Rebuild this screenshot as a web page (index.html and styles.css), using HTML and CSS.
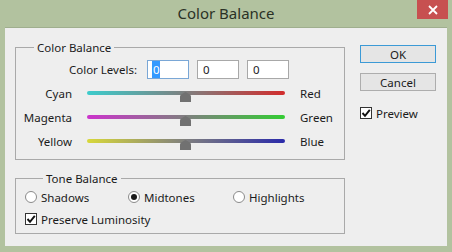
FILE: index.html
```html
<!DOCTYPE html>
<html lang="en">
  <head>
    <meta charset="utf-8">
    <title>Color Balance</title>
    <link rel="stylesheet" href="styles.css">
  </head>
  <body>
    <div class="window">
      <!-- Titelleiste -->
      <div class="titlebar">
        <span></span>
        <span class="title">Color Balance</span>
        <span class="close">
          <svg width="10" height="10" viewBox="0 0 10 10"><path d="M1 1 L9 9 M9 1 L1 9" stroke="#fff" stroke-width="1.8"/></svg>
        </span>
      </div>

      <div class="client">
        <div class="main">
          <!-- Color Balance -->
          <fieldset class="group balance">
            <legend>Color Balance</legend>
            <div class="levels">
              <label>Color Levels:</label>
              <input type="text" value="0" class="selected">
              <input type="text" value="0">
              <input type="text" value="0">
            </div>
            <div class="slider-row">
              <span class="name-left">Cyan</span>
              <div class="track cyan-red"><svg class="thumb" width="11" height="10" viewBox="0 0 11 10"><path d="M0 10 L0 4.5 Q0 3 1.5 2.2 L5.5 0 L9.5 2.2 Q11 3 11 4.5 L11 10 Z" fill="#717171"/></svg></div>
              <span class="name-right">Red</span>
            </div>
            <div class="slider-row">
              <span class="name-left">Magenta</span>
              <div class="track magenta-green"><svg class="thumb" width="11" height="10" viewBox="0 0 11 10"><path d="M0 10 L0 4.5 Q0 3 1.5 2.2 L5.5 0 L9.5 2.2 Q11 3 11 4.5 L11 10 Z" fill="#717171"/></svg></div>
              <span class="name-right">Green</span>
            </div>
            <div class="slider-row">
              <span class="name-left">Yellow</span>
              <div class="track yellow-blue"><svg class="thumb" width="11" height="10" viewBox="0 0 11 10"><path d="M0 10 L0 4.5 Q0 3 1.5 2.2 L5.5 0 L9.5 2.2 Q11 3 11 4.5 L11 10 Z" fill="#717171"/></svg></div>
              <span class="name-right">Blue</span>
            </div>
          </fieldset>

          <!-- Tone Balance -->
          <fieldset class="group tone">
            <legend>Tone Balance</legend>
            <div class="radios">
              <span class="option"><span class="radio"></span>Shadows</span>
              <span class="option"><span class="radio on"></span>Midtones</span>
              <span class="option"><span class="radio"></span>Highlights</span>
            </div>
            <div class="option check">
              <span class="box"><svg width="10" height="10" viewBox="0 0 10 10"><path d="M1.5 5 L4 7.8 L8.8 1.8" fill="none" stroke="#111" stroke-width="1.9"/></svg></span>
              Preserve Luminosity
            </div>
          </fieldset>
        </div>

        <!-- Buttons -->
        <div class="side">
          <button type="button" class="ok">OK</button>
          <button type="button">Cancel</button>
          <div class="option check">
            <span class="box"><svg width="10" height="10" viewBox="0 0 10 10"><path d="M1.5 5 L4 7.8 L8.8 1.8" fill="none" stroke="#111" stroke-width="1.9"/></svg></span>
            Preview
          </div>
        </div>
      </div>
    </div>
  </body>
</html>
```

FILE: styles.css
```css
/* Allgemeines */
body {
  margin: 0;
  padding: 0;
  background-color: #b2c29f;
  font-family: 'Noto Sans', sans-serif;
  font-size: 11.5px;
  color: #1b1b1b;
}

.window {
  width: 452px;
  height: 252px;
}

/* Titelleiste */
.titlebar {
  height: 27px;
  display: grid;
  grid-template-columns: 1fr auto 1fr;
}

.title {
  font-size: 15px;
  line-height: 27px;
  color: #2a3126;
}

.close {
  justify-self: end;
  margin-right: 4px;
  width: 31px;
  height: 19px;
  background-color: #c75050;
  display: flex;
  justify-content: center;
  align-items: center;
}

/* Inhalt */
.client {
  margin: 0 5px;
  height: 219px;
  background-color: #eeeeee;
  display: flex;
  box-sizing: border-box;
  border-top: 1px solid #9fae8e;
}

.main {
  padding: 12px 0 0 10px;
  width: 330px;
}

fieldset.group {
  margin: 0;
  padding: 0;
  border: 1px solid #a9a9a9;
}

fieldset.group legend {
  margin-left: 18px;
  padding: 0 3px;
  line-height: 15px;
}

fieldset.balance {
  padding-bottom: 6px;
}

.levels {
  display: flex;
  align-items: center;
  gap: 8px;
  margin: 5px 0 2px;
}

.levels label {
  width: 121px;
  text-align: right;
  margin-right: 2px;
}

.levels input {
  width: 42px;
  height: 19px;
  box-sizing: border-box;
  border: 1px solid #a8a8a8;
  background: #fff;
  font-family: 'Noto Sans', sans-serif;
  font-size: 11.5px;
  padding: 0 0 0 5px;
  color: #1b1b1b;
}

.levels input.selected {
  color: #fff;
  background: linear-gradient(to right, #fff 0, #fff 4px, #3399ff 4px, #3399ff 12px, #fff 12px);
  border-color: #7aa7d6;
}

/* Regler */
.slider-row {
  display: grid;
  grid-template-columns: 56px 198px auto;
  column-gap: 15px;
  align-items: center;
  height: 24px;
}

.name-left {
  text-align: right;
}

.track {
  position: relative;
  height: 4px;
  border-radius: 2px;
}

.cyan-red {
  background: linear-gradient(to right, #3ccccc, #7f7f7f 50%, #d22c2c);
}

.magenta-green {
  background: linear-gradient(to right, #cc33cc, #7f7f7f 50%, #33cc33);
}

.yellow-blue {
  background: linear-gradient(to right, #d8d83a, #7f7f7f 50%, #2a2aaa);
}

.thumb {
  position: absolute;
  left: 93px;
  top: 1px;
}

/* Tone Balance */
fieldset.tone {
  margin-top: 11px;
  height: 63px;
  box-sizing: border-box;
  padding-left: 9px;
}

.radios {
  display: grid;
  grid-template-columns: 103px 105px auto;
  margin-top: 1px;
}

.option {
  display: flex;
  align-items: center;
  gap: 4px;
  height: 20px;
}

.tone .check {
  margin-top: 2px;
}

.radio {
  width: 12px;
  height: 12px;
  box-sizing: border-box;
  border: 1px solid #8a8a8a;
  border-radius: 50%;
  background: #fff;
  display: flex;
  justify-content: center;
  align-items: center;
}

.radio.on::after {
  content: "";
  width: 6px;
  height: 6px;
  border-radius: 50%;
  background: #1b1b1b;
}

.box {
  width: 12px;
  height: 12px;
  box-sizing: border-box;
  border: 1px solid #333;
  background: #fff;
  display: flex;
  justify-content: center;
  align-items: center;
}

/* Buttons */
.side {
  padding: 17px 0 0 15px;
  display: flex;
  flex-direction: column;
  align-items: flex-start;
}

.side button {
  width: 76px;
  height: 18px;
  box-sizing: border-box;
  border: 1px solid #adadad;
  background: #e5e5e5;
  font-family: 'Noto Sans', sans-serif;
  font-size: 11.5px;
  color: #1b1b1b;
  padding: 0;
  line-height: 15px;
  margin-bottom: 10px;
}

.side button.ok {
  border-color: #3c9ad6;
}

.side .check {
  margin-top: 2px;
}
```
